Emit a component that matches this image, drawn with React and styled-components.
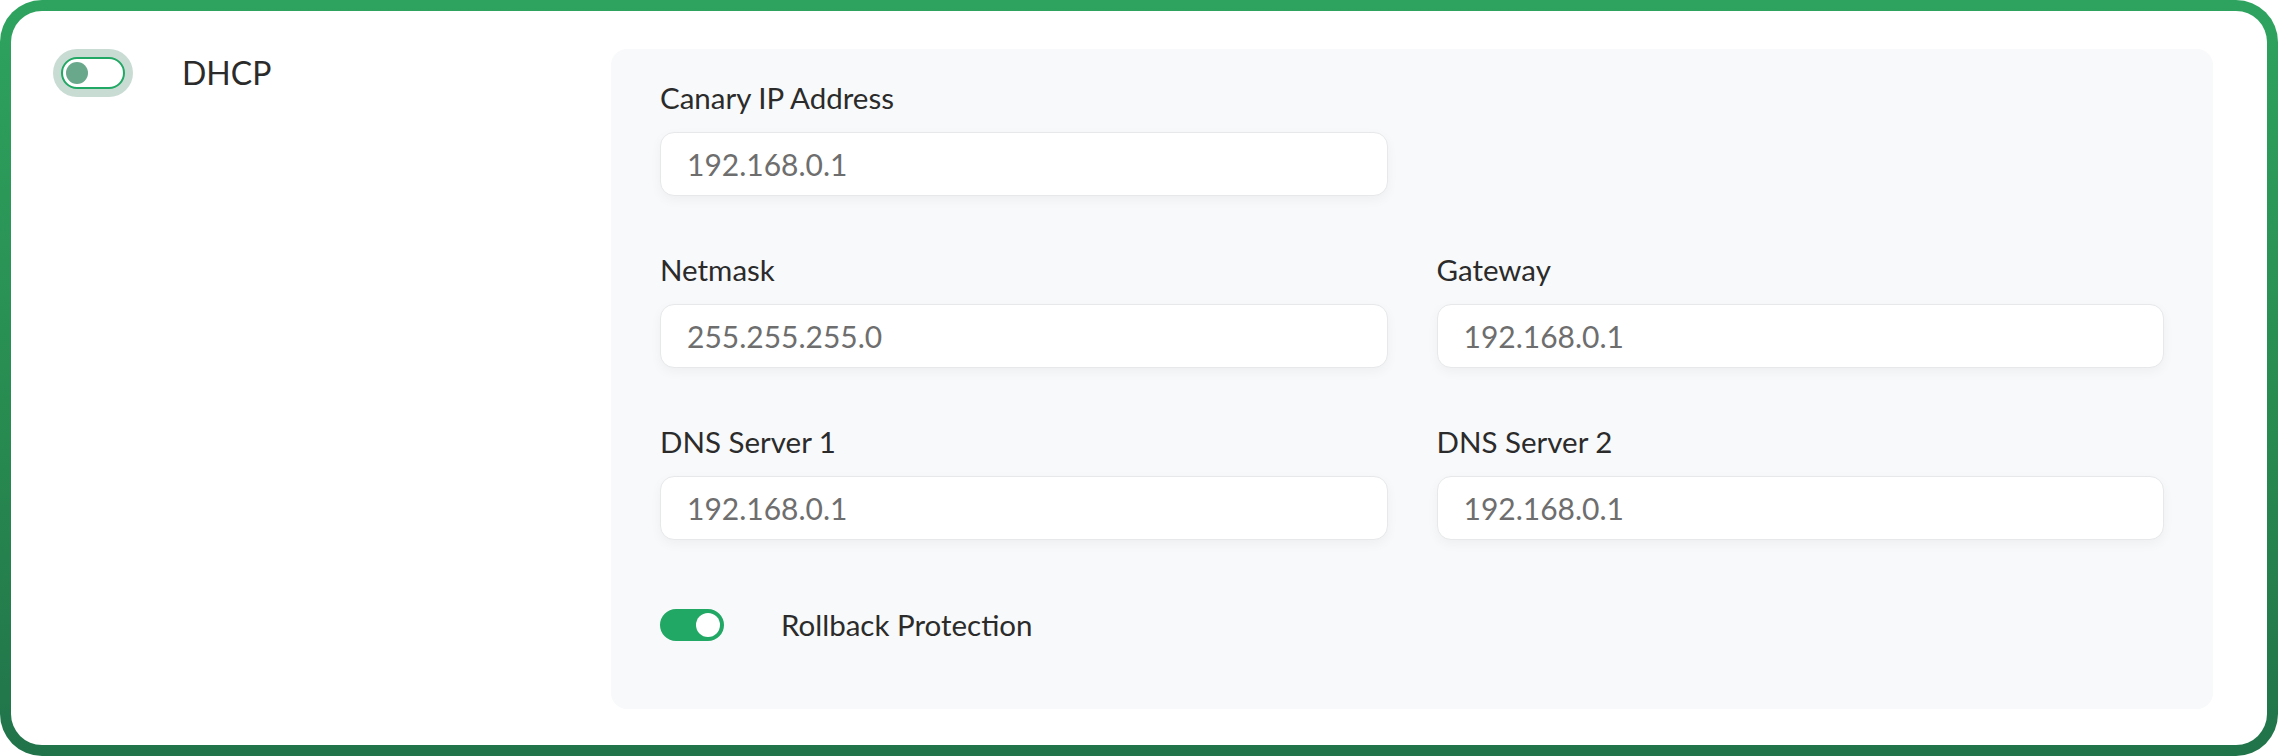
import React from 'react';
import styled, { createGlobalStyle } from 'styled-components';

const GlobalStyle = createGlobalStyle`
    html, body {
        margin: 0;
        padding: 0;
        background: #ffffff;
    }
    * {
        box-sizing: border-box;
    }
`

const rows = [
    [{ label: 'Canary IP Address', value: '192.168.0.1' }],
    [
        { label: 'Netmask', value: '255.255.255.0' },
        { label: 'Gateway', value: '192.168.0.1' },
    ],
    [
        { label: 'DNS Server 1', value: '192.168.0.1' },
        { label: 'DNS Server 2', value: '192.168.0.1' },
    ],
];

const Switch = ({ on, focused, label }) => (
    <SwitchRow>
        <Track role="switch" aria-checked={on} $on={on} $focused={focused}>
            <Knob $on={on} />
        </Track>
        <SwitchLabel $big={focused}>{label}</SwitchLabel>
    </SwitchRow>
)

export default function App() {
    return (
        <>
            <GlobalStyle />
            <Frame>
                <Card>
                    <Side>
                        <Switch on={false} focused label="DHCP" />
                    </Side>
                    <Panel>
                        {rows.map((row, i) => (
                            <Row key={i}>
                                {row.map((f) => (
                                    <Field key={f.label}>
                                        <Label>{f.label}</Label>
                                        <Input placeholder={f.value} />
                                    </Field>
                                ))}
                            </Row>
                        ))}
                        <Footer>
                            <Switch on label="Rollback Protection" />
                        </Footer>
                    </Panel>
                </Card>
            </Frame>
        </>
    )
}

const Frame = styled.div`
    width: 2278px;
    height: 756px;
    padding: 11px;
    border-radius: 42px;
    background: linear-gradient(180deg, #2ea35f 0%, #27894f 60%, #21734a 100%);
    font-family: 'Lato', 'Liberation Sans', sans-serif;
`
const Card = styled.div`
    display: flex;
    height: 100%;
    padding: 38px 54px 36px 50px;
    background: #ffffff;
    border-radius: 31px;
`
const Side = styled.div`
    width: 550px;
    flex-shrink: 0;
    padding-top: 8px;
`
const Panel = styled.div`
    flex: 1;
    display: flex;
    flex-direction: column;
    gap: 58px;
    padding: 33px 49px 0 49px;
    background: #f8f9fa;
    border-radius: 16px;
`
const Row = styled.div`
    display: grid;
    grid-template-columns: 1fr 1fr;
    column-gap: 49px;
`
const Field = styled.div`
    display: flex;
    flex-direction: column;
    gap: 18px;
`
const Label = styled.div`
    font-size: 29.5px;
    line-height: 32px;
    color: #2b2b2b;
`
const Input = styled.input`
    height: 64px;
    width: 100%;
    padding: 0 26px;
    border: 1px solid #e6e8ea;
    border-radius: 14px;
    background: #ffffff;
    box-shadow: 0 4px 12px rgba(0, 0, 0, 0.045);
    font-family: inherit;
    font-size: 30px;
    color: #2b2b2b;
    outline: none;
    &::placeholder {
        color: #6e6e6e;
    }
`
const Footer = styled.div`
    margin-top: 11px;
`
const SwitchRow = styled.div`
    display: flex;
    align-items: center;
    gap: 57px;
`
const Track = styled.div`
    position: relative;
    width: 64px;
    height: 32px;
    flex-shrink: 0;
    border-radius: 16px;
    border: 2px solid #22a865;
    background: ${(p) => (p.$on ? '#22a865' : '#ffffff')};
    box-shadow: ${(p) => (p.$focused ? '0 0 0 8px #c9dcd4' : 'none')};
`
const Knob = styled.span`
    position: absolute;
    top: 50%;
    left: ${(p) => (p.$on ? '34px' : '3px')};
    width: ${(p) => (p.$on ? '24px' : '22px')};
    height: ${(p) => (p.$on ? '24px' : '22px')};
    margin-top: ${(p) => (p.$on ? '-12px' : '-11px')};
    border-radius: 50%;
    background: ${(p) => (p.$on ? '#ffffff' : '#6aa88c')};
`
const SwitchLabel = styled.span`
    font-size: ${(p) => (p.$big ? '32px' : '29.5px')};
    line-height: 32px;
    color: #2b2b2b;
`
